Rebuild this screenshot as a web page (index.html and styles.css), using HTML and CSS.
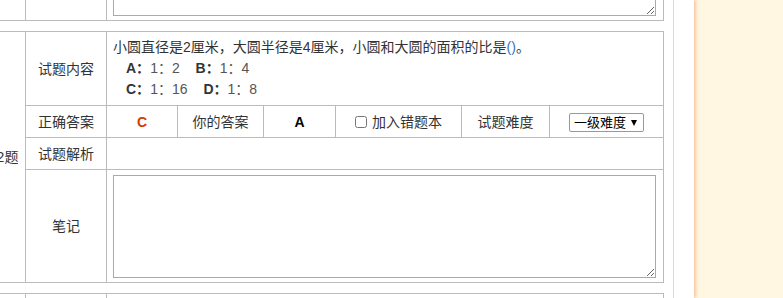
FILE: index.html
```html
<!DOCTYPE html>
<html lang="zh-CN">
<head>
    <meta charset="UTF-8">
    <meta name="viewport" content="width=device-width, initial-scale=1.0">
    <title>试题详情</title>
    <link rel="stylesheet" href="styles.css">
</head>
<body>
    <div class="page">
        <div class="content">
            <!-- tail of the previous question, scrolled mostly out of view -->
            <div class="prev-wrap">
                <table class="quiz">
                    <colgroup>
                        <col class="c-num"><col class="c-label"><col class="c-rest">
                    </colgroup>
                    <tr class="row-note">
                        <td class="num">第1题</td>
                        <td class="label">笔记</td>
                        <td class="note-cell"><textarea class="note"></textarea></td>
                    </tr>
                </table>
            </div>

            <table class="quiz">
                <colgroup>
                    <col class="c-num"><col class="c-label"><col class="c-ans"><col class="c-label2">
                    <col class="c-ans2"><col class="c-wrong"><col class="c-label3"><col class="c-level">
                </colgroup>
                <tr class="row-content">
                    <td class="num" rowspan="4">第2题</td>
                    <td class="label">试题内容</td>
                    <td class="question" colspan="6">
                        <p class="stem">小圆直径是2厘米，大圆半径是4厘米，小圆和大圆的面积的比是<span class="blank">()</span>。</p>
                        <div class="options">
                            <span class="opt"><b>A：</b>1：2</span>
                            <span class="opt"><b>B：</b>1：4</span>
                        </div>
                        <div class="options">
                            <span class="opt"><b>C：</b>1：16</span>
                            <span class="opt"><b>D：</b>1：8</span>
                        </div>
                    </td>
                </tr>
                <tr class="row-answer">
                    <td class="label">正确答案</td>
                    <td class="answer right">C</td>
                    <td class="label">你的答案</td>
                    <td class="answer">A</td>
                    <td class="label"><label class="wrong"><input type="checkbox"> 加入错题本</label></td>
                    <td class="label">试题难度</td>
                    <td class="label">
                        <span class="select-wrap">
                            <select class="level">
                                <option>一级难度</option>
                                <option>二级难度</option>
                                <option>三级难度</option>
                            </select>
                        </span>
                    </td>
                </tr>
                <tr class="row-analysis">
                    <td class="label">试题解析</td>
                    <td colspan="6"></td>
                </tr>
                <tr class="row-note">
                    <td class="label">笔记</td>
                    <td class="note-cell" colspan="6"><textarea class="note"></textarea></td>
                </tr>
            </table>

            <table class="quiz">
                <colgroup>
                    <col class="c-num"><col class="c-label"><col class="c-rest">
                </colgroup>
                <tr class="row-content">
                    <td class="num">第3题</td>
                    <td class="label">试题内容</td>
                    <td class="question"></td>
                </tr>
            </table>
        </div>
    </div>
</body>
</html>
```

FILE: styles.css
```css
body {
    margin: 0;
    background-color: #fff7e1;
    font-family: 'Liberation Sans', 'Noto Sans CJK SC', sans-serif;
    font-size: 14px;
    color: #333;
    overflow: hidden;
}
.page {
    width: 694px;
    height: 298px;
    overflow: hidden;
    background-color: #fff;
    box-shadow: 2px 0 3px #f7c6a0;
}
.content {
    width: 673px;
    height: 298px;
    border-right: 1px solid #fbd1ad;
}
.prev-wrap {
    height: 21px;
    overflow: hidden;
    display: flex;
    flex-direction: column;
    justify-content: flex-end;
}
.quiz {
    width: 688px;
    margin-left: -25px;
    border-collapse: collapse;
    table-layout: fixed;
    flex-shrink: 0;
}
.quiz + .quiz, .prev-wrap + .quiz {
    margin-top: 10px;
}
.quiz td {
    border: 1px solid #bbb;
    padding: 0;
    line-height: 20px;
}
.c-num { width: 50px; }
.c-label { width: 81px; }
.c-ans { width: 71px; }
.c-label2 { width: 86px; }
.c-ans2 { width: 72px; }
.c-wrong { width: 126px; }
.c-label3 { width: 88px; }
.c-level { width: 114px; }
.c-rest { width: 557px; }

.num, .label, .answer {
    text-align: center;
}
/* cell heights are content heights, padding comes on top */
.row-content td {
    height: 73px;
}
.row-answer td, .row-analysis td {
    height: 31px;
}
.row-note td {
    height: 112px;
}
.quiz .question {
    height: 68px;
    vertical-align: top;
    padding: 5px 6px 0;
}
.stem {
    height: 21px;
    margin: 0;
    line-height: 21px;
}
.blank {
    color: #3a6fc4;
}
.options {
    height: 21px;
    padding-left: 13px;
    line-height: 21px;
    color: #555;
}
.opt {
    margin-right: 12px;
}
.opt b {
    color: #333;
}
.answer {
    font-weight: bold;
    color: #000;
}
.answer.right {
    color: #d33c00;
}
.wrong input {
    width: 12px;
    height: 12px;
    margin: 0 1px 0 0;
    vertical-align: -1px;
}
.select-wrap {
    position: relative;
    display: inline-block;
    vertical-align: middle;
}
.select-wrap::after {
    content: "";
    position: absolute;
    right: 7px;
    top: 7px;
    border-left: 3px solid transparent;
    border-right: 3px solid transparent;
    border-top: 6px solid #000;
    pointer-events: none;
}
.level {
    display: block;
    appearance: none;
    width: 75px;
    height: 19px;
    padding: 0 0 0 4px;
    border: 1px solid #999;
    border-radius: 2px;
    background-color: #fff;
    font-family: inherit;
    font-size: 13px;
    color: #000;
}
.quiz .note-cell {
    height: 103px;
    padding: 5px 7px 4px 6px;
    vertical-align: top;
}
.note {
    display: block;
    box-sizing: border-box;
    width: 543px;
    height: 103px;
    margin: 0;
    border: 1px solid #aaa;
    resize: both;
}
```
